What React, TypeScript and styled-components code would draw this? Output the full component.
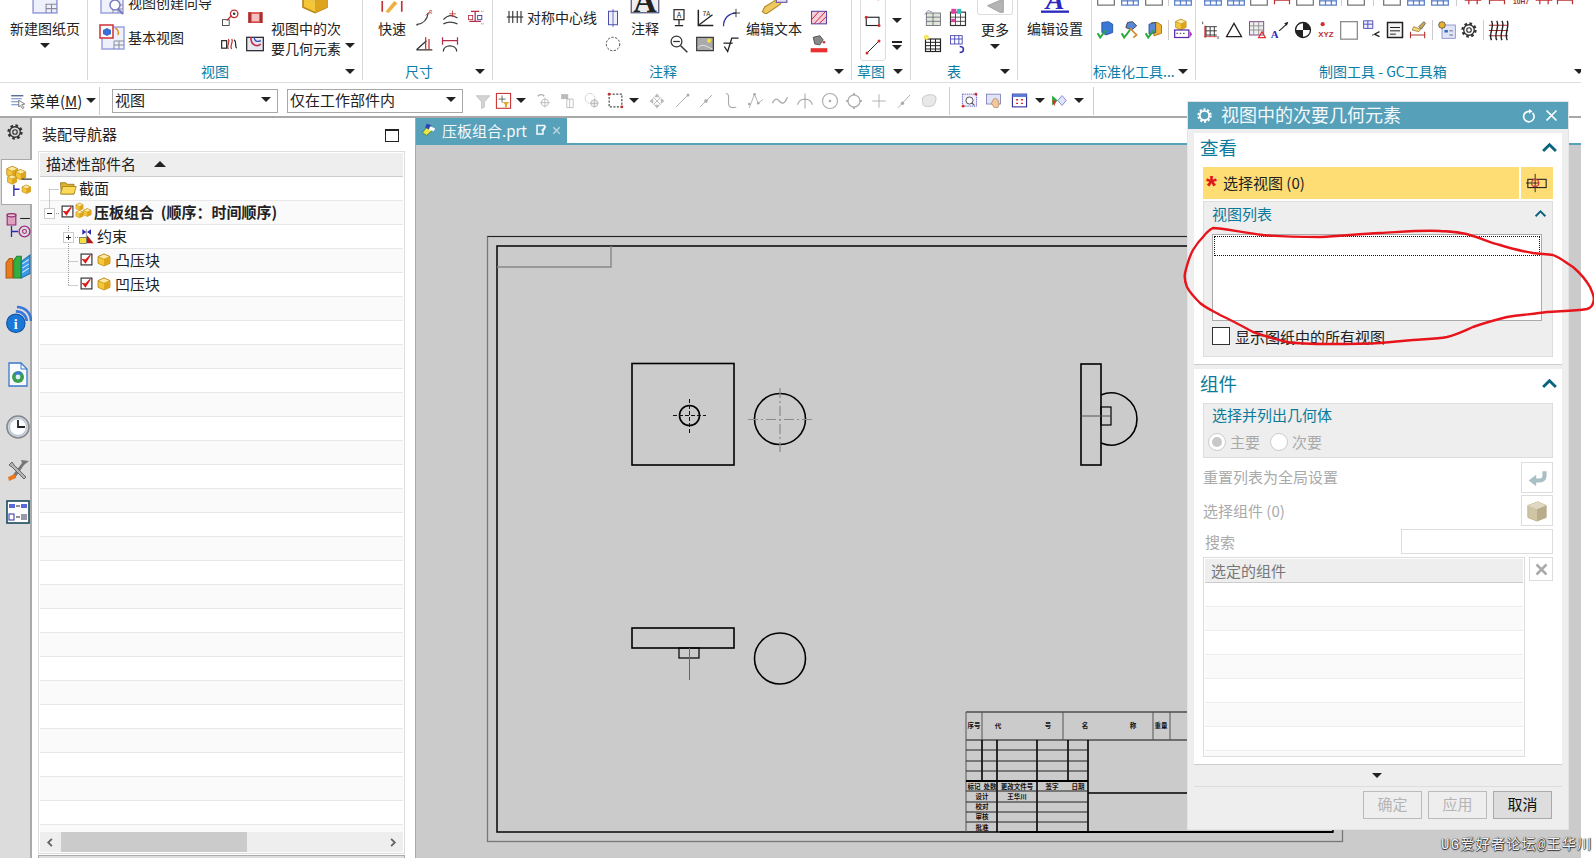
import React from 'react';
import styled, { createGlobalStyle } from 'styled-components';

const Global = createGlobalStyle`
  html, body { margin: 0; padding: 0; background: #fff; overflow: hidden; }
  body { font-family: "Noto Sans CJK SC", "Liberation Sans", sans-serif; font-size: 14px; color: #222; }
  * { box-sizing: border-box; }
`;

const Page = styled.div`position: relative; width: 1594px; height: 858px; overflow: hidden; background: #fff;`;
const Frame = styled.div`width: 1581px; height: 858px; display: flex; flex-direction: column;`;

/* ---------- ribbon ---------- */
const Ribbon = styled.div`display: flex; height: 83px; flex: none; border-bottom: 1px solid #ddd; overflow: hidden;`;
const Group = styled.section<{ $w: number; $end?: boolean }>`
  width: ${p => p.$w}px; height: 80px; flex: none; display: flex; flex-direction: column;
  border-right: ${p => (p.$end ? 'none' : '1px solid #d8d8d8')};
`;
const GroupBody = styled.div<{ $pl?: number }>`height: 63px; display: flex; align-items: flex-start; padding-left: ${p => p.$pl ?? 0}px;`;
const GroupFoot = styled.div<{ $pl: number; $pr?: number }>`
  height: 16px; display: flex; align-items: center; padding-left: ${p => p.$pl}px; padding-right: ${p => p.$pr ?? 7}px;
`;
const GroupLabel = styled.span`font-size: 14px; line-height: 16px; color: #0a7ea6; white-space: nowrap;`;
const Caret = styled.i<{ $ml?: number; $mt?: number }>`
  display: block; flex: none; width: 0; height: 0; border-left: 5px solid transparent; border-right: 5px solid transparent;
  border-top: 5px solid #222; margin-left: ${p => p.$ml ?? 0}px; margin-top: ${p => p.$mt ?? 0}px;
`;
const FootCaret = styled(Caret)<{ $mr?: number }>`margin-left: auto; margin-right: ${p => p.$mr ?? 0}px;`;
const TallTool = styled.div<{ $w?: number; $ml?: number }>`
  display: flex; flex-direction: column; align-items: center; flex: none;
  width: ${p => (p.$w ? `${p.$w}px` : 'auto')}; margin-left: ${p => p.$ml ?? 0}px;
`;
const TopIcon = styled.div`height: 14px; display: flex; align-items: flex-end; justify-content: center; overflow: hidden;`;
const ToolLabel = styled.div`font-size: 14px; line-height: 20px; margin-top: 4px; white-space: nowrap; color: #222;`;
const TwoLine = styled.div`display: flex; align-items: center; margin-top: 4px; width: 100%;`;
const TwoLineText = styled.div`font-size: 14px; line-height: 20px; white-space: nowrap;`;
const RowStack = styled.div<{ $w: number }>`width: ${p => p.$w}px; flex: none; margin-top: -10px;`;
const IconText = styled.div<{ $mt?: number }>`display: flex; align-items: center; gap: 4px; height: 24px; font-size: 14px; white-space: nowrap; margin-top: ${p => p.$mt ?? 0}px;`;
const SmallGrid = styled.div<{ $cols: number; $w?: number; $ml?: number }>`
  display: grid; grid-template-columns: repeat(${p => p.$cols}, ${p => p.$w ?? 25}px); grid-auto-rows: 26px;
  padding-top: 5px; flex: none; margin-left: ${p => p.$ml ?? 0}px;
`;
const Cell = styled.div<{ $w?: number }>`
  display: flex; align-items: center; justify-content: center; flex: none; ${p => (p.$w ? `width:${p.$w}px;` : '')}
`;
const TextRow = styled.div<{ $w: number }>`display: flex; align-items: center; gap: 3px; height: 26px; margin-top: 4px; width: ${p => p.$w}px; font-size: 14px; white-space: nowrap; flex: none;`;
const SketchStrip = styled.div`
  width: 26px; margin: -19px 0 0 8px; border: 1px solid #ddd; border-radius: 0 0 3px 3px; display: flex; flex-direction: column; flex: none;
`;
const SketchCell = styled.div`height: 26px; display: flex; align-items: center; justify-content: center; flex: none;`;
const CaretColumn = styled.div`display: flex; flex-direction: column; align-items: center; width: 22px; padding-top: 18px; flex: none;`;
const CaretBar = styled.b`display: block; width: 10px; height: 2px; background: #222; margin-top: 18px; margin-bottom: 2px;`;
const MoreBox = styled.div`width: 36px; height: 15px; border: 1px solid #ddd; border-top: none; border-radius: 0 0 3px 3px; display: flex; justify-content: center; overflow: hidden; align-items: flex-end;`;
const MoreTool = styled.div`display: flex; flex-direction: column; align-items: center; width: 44px; margin-left: 3px; flex: none;`;
const IconRows = styled.div`display: flex; flex-direction: column; margin-top: -21px;`;
const IconRow = styled.div<{ $pl?: number }>`display: flex; align-items: center; height: 34px; padding-left: ${p => p.$pl ?? 0}px;`;
const Sep = styled.b<{ $mx?: number; $h?: number }>`display: block; flex: none; width: 1px; height: ${p => p.$h ?? 20}px; background: #ccc; margin: 0 ${p => p.$mx ?? 0}px;`;

/* ---------- quick bar ---------- */
const QuickBar = styled.div`height: 35px; flex: none; display: flex; align-items: center; border-bottom: 2px solid #a8a8a8; padding: 2px 0 0 9px;`;
const MenuGroup = styled.div`width: 90px; flex: none; display: flex; align-items: center;`;
const MenuText = styled.span`font-size: 15px; margin-left: 3px; white-space: nowrap; u { text-decoration: underline; }`;
const Select = styled.div<{ $w: number; $ml: number }>`
  width: ${p => p.$w}px; height: 24px; margin-left: ${p => p.$ml}px; flex: none; border: 1px solid #a8a8a8; display: flex; align-items: center;
  justify-content: space-between; padding: 0 6px 2px 2px; font-size: 15px; background: #fff;
`;
const QCell = styled.div<{ $w: number; $ml?: number }>`width: ${p => p.$w}px; margin-left: ${p => p.$ml ?? 0}px; flex: none; display: flex; align-items: center; justify-content: center;`;

/* ---------- main ---------- */
const Main = styled.div`flex: 1; display: flex; min-height: 0;`;
const Rail = styled.nav`width: 32px; flex: none; background: #dcdcdc; border-right: 2px solid #aaa; display: flex; flex-direction: column; align-items: center;`;
const RailGear = styled.div`height: 41px; display: flex; align-items: center; justify-content: center; padding-bottom: 13px; width: 100%;`;
const RailTab = styled.div<{ $active?: boolean; $h: number }>`
  height: ${p => p.$h}px; display: flex; align-items: center; justify-content: center; flex: none;
  ${p => p.$active ? 'width: 32px; margin-left: 2px; margin-right: -2px; padding-left: 4px; background: #fff; border: 1px solid #aaa; border-right: none;' : 'width: 100%; padding-left: 5px;'}
`;
const NavPanel = styled.aside`width: 383px; flex: none; background: #fff; padding: 0 10px 0 6px; display: flex; flex-direction: column;`;
const NavHead = styled.div`height: 33px; flex: none; display: flex; align-items: center; justify-content: space-between; padding: 0 6px 2px 4px; font-size: 15px;`;
const Maximize = styled.i`display: block; width: 14px; height: 13px; border: 1px solid #222; border-top-width: 2px; margin-top: 3px;`;
const TreeBox = styled.div`flex: none; height: 703px; border: 1px solid #ddd; padding: 1px; background: #fff; position: relative; display: flex; flex-direction: column;`;
const TreeHead = styled.div`height: 24px; flex: none; background: #eee; border-bottom: 1px solid #ccc; display: flex; align-items: center; padding: 0 0 2px 6px; font-size: 15px; gap: 18px;`;
const SortUp = styled.i`display: block; width: 0; height: 0; border-left: 6px solid transparent; border-right: 6px solid transparent; border-bottom: 6px solid #222;`;
const TreeRows = styled.div`flex: 1; overflow: hidden; position: relative;`;
const TreeRow = styled.div<{ $odd: boolean; $pl?: number; $bold?: boolean; $gap?: number }>`
  height: 24px; display: flex; align-items: center; gap: ${p => p.$gap ?? 2}px; background: ${p => (p.$odd ? '#fafafa' : '#fff')}; border-bottom: 1px solid #e8e8e8;
  padding: 0 0 2px ${p => p.$pl ?? 0}px; font-size: 15px; font-weight: ${p => (p.$bold ? 700 : 400)}; white-space: pre; color: #222;
`;
const TreeLines = styled.svg`position: absolute; left: 0; top: 0; width: 120px; height: 120px; pointer-events: none;`;
const HScroll = styled.div`height: 20px; flex: none; background: #eee; display: flex; align-items: center;`;
const ScrollThumb = styled.div`width: 186px; height: 20px; background: #cbcbcb; margin-left: 21px;`;
const ScrollArrow = styled.div<{ $right?: boolean }>`margin-left: ${p => (p.$right ? 'auto' : '5px')}; margin-right: ${p => (p.$right ? '5px' : '0')}; display: flex;`;
const ScrollLeftWrap = styled.div`display: flex; width: 0; overflow: visible; align-items: center;`;
const NavBottom = styled.div`flex: 1; margin-top: 1px; border: 1px solid #aaa; border-width: 1px 1px 0; background: #ddd;`;

const Workspace = styled.div`flex: 1; min-width: 0; display: flex; flex-direction: column; border-left: 1px solid #aaa;`;
const TabBar = styled.div`height: 25px; flex: none; background: #fff; display: flex;`;
const DocTab = styled.div`width: 151px; background: #58a1bb; color: #f4fafc; display: flex; align-items: center; font-size: 15px; padding: 0 0 1px 5px; gap: 4px; white-space: nowrap;`;
const DocTabIcons = styled.div`display: flex; align-items: center; gap: 4px; margin-left: 4px;`;
const TabRule = styled.div`height: 2px; flex: none; background: #58a1bb;`;
const Canvas = styled.main`flex: 1; background: #cbcbcb; min-height: 0; overflow: hidden;`;
const Sheet = styled.svg`display: block; width: 1165px; height: 713px;`;
const TinyText = styled.text`font-family: "Noto Sans CJK SC", sans-serif; font-size: 6.5px; font-weight: 700; fill: #111; text-anchor: middle;`;

/* ---------- dialog ---------- */
const Dialog = styled.div`position: absolute; left: 1188px; top: 102px; width: 380px; height: 727px; background: #eee; display: flex; flex-direction: column; box-shadow: 0 0 0 1px #e4e4e4;`;
const DialogHead = styled.header`height: 27px; flex: none; background: #56a0ba; color: #fff; display: flex; align-items: center; padding: 0 5px 0 9px; font-size: 18px;`;
const DialogTitle = styled.span`margin: 0 0 3px 9px; white-space: nowrap; flex: 1; color: #f3f9fb;`;
const DialogBody = styled.div`padding: 4px 6px 0; display: flex; flex-direction: column; gap: 4px;`;
const Section = styled.section<{ $h: number }>`height: ${p => p.$h}px; flex: none; background: #fff; border-bottom: 1px solid #ccc; padding: 0 9px; display: flex; flex-direction: column;`;
const SectionHead = styled.div`height: 34px; flex: none; display: flex; align-items: center; justify-content: space-between; font-size: 18.5px; color: #0a7a9a; padding-bottom: 6px; margin: 0 -5px 0 -3px;`;
const SelectRow = styled.div`height: 32px; flex: none; display: flex; gap: 2px;`;
const SelectMain = styled.div`flex: 1; background: #ffdd75; display: flex; align-items: center; padding: 0 0 2px 1px; font-size: 15px; gap: 4px;`;
const SelectBtn = styled.div`width: 32px; background: #ffdd75; display: flex; align-items: center; justify-content: center;`;
const Star = styled.span`color: #e01818; width: 15px; text-align: center; font-size: 28px; font-weight: 700; line-height: 14px; height: 14px; font-family: "Liberation Sans", sans-serif; margin-top: 8px;`;
const GroupBox = styled.div<{ $h: number; $mt?: number }>`height: ${p => p.$h}px; flex: none; margin-top: ${p => p.$mt ?? 0}px; background: #eee; border: 1px solid #ddd; display: flex; flex-direction: column; padding: 0 10px 0 8px;`;
const BoxTitle = styled.div<{ $h: number; $pb: number }>`height: ${p => p.$h}px; flex: none; display: flex; align-items: center; justify-content: space-between; font-size: 15px; color: #0a7a9a; padding-bottom: ${p => p.$pb}px; margin-right: -5px;`;
const ListBox = styled.div`height: 87px; flex: none; background: #fff; border: 1px solid #aaa; padding: 1px; `;
const DottedRow = styled.div`height: 20px; border: 1px dotted #111;`;
const CheckRow = styled.label`display: flex; align-items: center; gap: 5px; height: 18px; margin-top: 6px; font-size: 15px; white-space: nowrap;`;
const CheckBox = styled.i`display: block; width: 18px; height: 18px; border: 1px solid #333; background: #fff;`;
const RadioRow = styled.div`display: flex; align-items: center; gap: 10px; color: #aaa; font-size: 15px; margin-left: -4px;`;
const RadioItem = styled.label`display: flex; align-items: center; gap: 4px;`;
const Radio = styled.i<{ $on?: boolean }>`
  display: flex; align-items: center; justify-content: center; width: 18px; height: 18px; border-radius: 50%; border: 1px solid #ccc; background: #fff;
  &::after { content: ""; display: ${p => (p.$on ? 'block' : 'none')}; width: 10px; height: 10px; border-radius: 50%; background: #c8c8c8; }
`;
const ActionRow = styled.div<{ $mt: number }>`height: 31px; flex: none; margin-top: ${p => p.$mt}px; display: flex; align-items: center; justify-content: space-between; color: #aaa; font-size: 15px;`;
const ActionLabel = styled.span`margin-bottom: 2px;`;
const ActionBtn = styled.div`width: 32px; height: 31px; border: 1px solid #ddd; background: #fff; display: flex; align-items: center; justify-content: center;`;
const SearchRow = styled.div`height: 25px; flex: none; margin-top: 3px; display: flex; align-items: center; justify-content: space-between; color: #aaa; font-size: 15px; padding-left: 2px;`;
const SearchInput = styled.div`width: 152px; height: 25px; background: #fff; border: 1px solid #ddd;`;
const TableRow = styled.div`height: 200px; flex: none; margin-top: 3px; display: flex; gap: 4px; align-items: flex-start;`;
const CompTable = styled.div`width: 322px; height: 200px; border: 1px solid #ddd; padding: 1px; overflow: hidden; background: #fff;`;
const CompHead = styled.div`height: 24px; background: #eee; border-bottom: 1px solid #ccc; color: #777; font-size: 15px; display: flex; align-items: center; padding-left: 6px; line-height: 1;`;
const CompRow = styled.div<{ $odd: boolean }>`height: 24px; background: ${p => (p.$odd ? '#fafafa' : '#fff')}; border-bottom: 1px solid #eee;`;
const ClearBtn = styled.div`width: 24px; height: 24px; border: 1px solid #ddd; display: flex; align-items: center; justify-content: center; background: #fff;`;
const Expander = styled.div`height: 17px; flex: none; margin: 5px 6px 0; border-bottom: 1px solid #ddd; display: flex; justify-content: center; padding: 3px 2px 0 0;`;
const Footer = styled.footer`display: flex; justify-content: flex-end; gap: 6px; padding: 4px 16px 0 0;`;
const DlgButton = styled.button<{ $primary?: boolean }>`
  width: 59px; height: 28px; padding: 0 0 3px; border: 1px solid ${p => (p.$primary ? '#aaa' : '#bbb')}; background: ${p => (p.$primary ? '#ddd' : '#eee')};
  color: ${p => (p.$primary ? '#111' : '#b4b4b4')}; font: 15px "Noto Sans CJK SC", sans-serif;
`;
const Overlay = styled.svg`position: absolute; left: 0; top: 0; width: 1594px; height: 858px; pointer-events: none;`;
const Watermark = styled.div`
  position: absolute; left: 1441px; top: 836px; color: #f4f4f4; font-size: 14px; line-height: 18px; letter-spacing: 1.3px; white-space: nowrap;
  font-family: "Liberation Mono", "Noto Sans CJK SC", monospace; text-shadow: 0 0 1px #222, 1px 0 1px #333, 0 1px 1px #333;
`;

/* ---------- icons ---------- */
const Ic = styled.svg<{ $s: number }>`display: block; flex: none; width: ${p => p.$s}px; height: ${p => p.$s}px;`;
const cube = (x = 0, y = 0, k = 1) => (
  <g transform={`translate(${x} ${y}) scale(${k})`}>
    <path d="M3 7 12 3l9 4v10l-9 4-9-4z" fill="#f4c63a" stroke="#b98512" strokeWidth="1.2" />
    <path d="M3 7l9 4 9-4-9-4z" fill="#fdeaa0" stroke="#b98512" strokeWidth="1" />
    <path d="M12 11v10l9-4V7z" fill="#dda41c" />
  </g>
);
const sheet = (x = 0, y = 0) => (
  <g transform={`translate(${x} ${y})`}>
    <rect x="1" y="1" width="22" height="22" fill="#eef0fb" stroke="#9aa2de" strokeWidth="1.5" />
    <path d="M13 23v-8h10M13 19h10M18 15v8" fill="none" stroke="#8a8a9a" />
  </g>
);
const g = (d: string, c = '#999', w = 1.5) => <path d={d} fill="none" stroke={c} strokeWidth={w} />;
const low = (n: React.ReactNode) => <g transform="translate(0 13)">{n}</g>;
const dash = '#aaa';

const icons: Record<string, React.ReactNode> = {
  sheet: sheet(),
  wizard: <>{sheet()}<circle cx="15" cy="15" r="5" fill="#fff" stroke="#7a7ac0" strokeWidth="1.5" /><path d="M18 19l5 5" stroke="#7a7ac0" strokeWidth="2" /></>,
  base: <>{sheet(1, 1)}<rect x="0" y="0" width="13" height="13" fill="#fff" stroke="#d03030" strokeWidth="1.5" /><path d="M3 5l4-2 4 2v4l-4 2-4-2z" fill="#3a6fd8" /><path d="M15 3c3 1 4 4 3 7" fill="none" stroke="#e89020" strokeWidth="1.5" /></>,
  proj: <><rect x="3" y="14" width="8" height="7" fill="#fff" stroke="#333" /><circle cx="17" cy="7" r="4.5" fill="#fff" stroke="#c03030" strokeWidth="1.6" />{g('M8 15l6-6', '#c03030')}<circle cx="17" cy="7" r="1.5" fill="#333" /></>,
  sect: <><rect x="4" y="5" width="17" height="13" fill="#d84848" /><path d="M4 5h3v13H4zM18 5h3v13h-3z" fill="#a83030" /><rect x="8" y="7" width="9" height="9" fill="#f6c0c0" /></>,
  brk: <><rect x="2" y="8" width="6" height="9" fill="#fff" stroke="#222" strokeWidth="1.4" />{g('M10 6c3 3-3 7 0 12M14 6c3 3-3 7 0 12', '#c03030')}{g('M17 7c4 3 0 8 3 10', '#222')}</>,
  detail: <><rect x="2" y="4" width="20" height="16" fill="#e8e8f0" stroke="#333" strokeWidth="1.6" /><path d="M7 4c0 10 8 12 12 8" fill="none" stroke="#c03050" strokeWidth="2" /><path d="M11 4c0 5 4 6 8 4" fill="none" stroke="#3050c0" strokeWidth="1.5" /></>,
  bigcube: <><g transform="translate(0 2)">{cube(0, 0)}</g><path d="M3 9l9-4v9l-9-3z" fill="#8cb4e8" /></>,
  quick: <>{g('M3 22V12M21 22V12', '#c03030')}<path d="M6 22l8-10 3 2-8 9z" fill="#f0b040" /></>,
  rad: <>{g('M3 20c8-1 13-6 14-14', '#444')}<circle cx="4" cy="20" r="1" fill="#444" />{g('M14 9l5-5', '#c03030', 1)}<text x="18" y="7" fontSize="6" fill="#c03030">R</text></>,
  ang: <>{g('M4 14c6-6 10-6 17-2M4 19c6-3 10-3 17 0', '#444')}{g('M15 3v8M11 7h8', '#c03030', 1)}</>,
  chain: <>{g('M6 4h10M11 4v12M4 16h14', '#b03048')}<rect x="3" y="9" width="5" height="5" fill="none" stroke="#b03048" /><rect x="14" y="9" width="5" height="5" fill="none" stroke="#3030a0" /><path d="M18 4h4M18 19h4" stroke="#c03030" strokeDasharray="1 1" /></>,
  angle: <>{g('M3 19l12-11M3 19h19', '#333')}{g('M14 4v15M18 6v13', '#c03030')}</>,
  arclen: <>{g('M4 21c0-9 16-9 16 0', '#333')}{g('M3 4v9M21 4v9M3 8h18', '#b03048')}</>,
  sym: <>{g('M4 4v16M9 4v16M15 4v16M20 4v16', '#333')}{g('M1 12h22', '#333')}</>,
  symbox: <><rect x="6" y="3" width="12" height="18" fill="#eef0fb" stroke="#4a4aa8" strokeWidth="1.3" />{g('M12 0v24', '#4a4aa8', 1)}</>,
  dcirc: <circle cx="12" cy="12" r="9" fill="none" stroke="#444" strokeDasharray="3 2" strokeWidth="1.3" />,
  bigA: <><rect x="1" y="0" width="22" height="23" fill="#eee" stroke="#55557a" /><text x="12" y="22" textAnchor="middle" fontSize="26" fontWeight="700" fontFamily="Liberation Serif" fill="#222">A</text></>,
  note: <><rect x="6" y="2" width="12" height="12" fill="#fff" stroke="#222" strokeWidth="1.4" /><text x="12" y="12" fontSize="9" textAnchor="middle" fill="#222">A</text>{g('M12 14v6M7 21h10', '#222')}</>,
  dimA: <>{g('M4 2v19h18', '#222', 1.8)}{g('M5 20l16-12', '#222')}<text x="9" y="10" fontSize="8" fill="#222">7A</text></>,
  arc: <>{g('M3 22C3 12 10 6 18 6', '#3030a0')}{g('M18 1v10M14 6h9', '#222', 1)}</>,
  zoom: <><circle cx="9" cy="9" r="6.5" fill="#fff" stroke="#333" strokeWidth="1.5" />{g('M5 9h8', '#333')}{g('M14 14l8 8', '#333', 1.8)}</>,
  image: <><rect x="2" y="4" width="20" height="16" fill="#aaa" stroke="#333" strokeWidth="1.4" /><circle cx="17" cy="8" r="2.5" fill="#f4e040" /><path d="M3 17c5-6 9-3 18 1" stroke="#eee" fill="none" /></>,
  rough: <>{g('M4 15l4 6 5-16h8', '#222', 1.6)}{g('M3 11h11', '#222')}</>,
  bone: <><path d="M2 22l2-4 8-5 6-8 4 3-5 8-9 6-3 2z" fill="#edc960" stroke="#b58a2a" /><rect x="14" y="6" width="9" height="8" fill="#e8e0f0" stroke="#6a5aa8" /></>,
  hatch: <><rect x="3" y="4" width="18" height="15" fill="#f4d0d8" stroke="#5a4aa8" strokeWidth="1.3" />{g('M3 14l9-10M6 19L20 4M12 19l9-9', '#d02040', 1.2)}</>,
  paint: <><path d="M5 4l8-2 4 5-4 6-6-1z" fill="#888" stroke="#444" /><circle cx="18" cy="10" r="1.5" fill="#c03030" /><rect x="2" y="17" width="20" height="5" fill="#e83030" /></>,
  skRect: <><rect x="3" y="7" width="17" height="11" fill="none" stroke="#222" strokeWidth="1.5" /><circle cx="3" cy="7" r="2" fill="#d03030" /><circle cx="20" cy="18" r="2" fill="#d03030" /></>,
  skLine: <>{g('M4 20L20 4', '#222', 1.3)}<circle cx="4" cy="20" r="2" fill="#d03030" /><circle cx="20" cy="4" r="2" fill="#d03030" /></>,
  t1: <><rect x="4" y="6" width="17" height="15" fill="#dfe8d8" stroke="#667" />{g('M4 11h17M4 16h17M12 6v15', '#667', 1)}<path d="M2 8l4-5 5 2" fill="none" stroke="#889" /></>,
  t2: <><rect x="3" y="5" width="18" height="16" fill="#fff" stroke="#333" strokeWidth="1.4" />{g('M3 11h18M3 16h18M9 5v16M15 5v16', '#333', 1)}<rect x="4" y="1" width="6" height="6" fill="#e040a0" /><rect x="11" y="1" width="5" height="6" fill="#30c0c0" /><rect x="4" y="13" width="5" height="4" fill="#e040a0" /></>,
  t3: <><rect x="3" y="6" width="18" height="15" fill="#fff" stroke="#222" strokeWidth="1.4" />{g('M3 10h18M3 14h18M3 18h18M9 6v15M15 6v15', '#222', 1.2)}<circle cx="4" cy="4" r="3" fill="#f4e860" /></>,
  t4: <><rect x="3" y="2" width="14" height="10" fill="#fff" stroke="#3a3ab0" />{g('M3 6h14M8 2v10M13 2v10', '#3a3ab0', 1)}{g('M14 15c6 0 6 7 0 7', '#3a3ab0', 2)}</>,
  moreA: <path d="M3 14l15 8h4V6z" fill="#b4b4b4" stroke="#999" />,
  editA: <><text x="12" y="20" textAnchor="middle" fontSize="24" fontWeight="700" fontStyle="italic" fontFamily="Liberation Serif" fill="#2a2ac0">A</text><rect x="0" y="21" width="24" height="2" fill="#2a2ac0" /></>,
  std1: <><path d="M7 3l8-1 5 3v10l-8 3-5-3z" fill="#3a78d8" stroke="#224a90" />{g('M2 16l3 5 7-9', '#2aa83a', 2.4)}</>,
  std2: <><path d="M9 3l6-1 5 5-6 5-7-3z" fill="#5a88d8" stroke="#333" /><path d="M12 10l8 8-4 3" fill="none" stroke="#d09030" strokeWidth="2" />{g('M2 16l3 5 7-9', '#2aa83a', 2.4)}</>,
  std3: <><path d="M9 3h7l5 3v10l-9 3z" fill="#f0b030" stroke="#a06a10" /><path d="M6 5l8-2v12l-8 2z" fill="#5a88d8" stroke="#224a90" />{g('M2 16l3 5 7-9', '#2aa83a', 2.4)}</>,
  std4: <>{cube(1, -3, 0.7)}<rect x="2" y="12" width="17" height="9" fill="#fff" stroke="#5a2aa8" strokeWidth="1.5" /><path d="M4 16h2M8 16h2M12 16h2" stroke="#222" /><path d="M20 13l3 4-3 4z" fill="#b030c0" /></>,
  gc1: <><path d="M2 2v3" stroke="#333" />{g('M6 8h13M6 13h13M6 18h13M6 8v12M11 8v12M16 8v12', '#333', 1.1)}<path d="M4 7h2v14H4z" fill="#d03030" /><path d="M4 20h15" stroke="#d03030" /><text x="19" y="23" fontSize="6" fill="#333">x</text></>,
  tri: g('M12 4L3 20h18z', '#222', 1.5),
  gc3: <><rect x="3" y="2" width="17" height="16" fill="#eee" stroke="#884a8a" strokeWidth="1.2" />{g('M3 7h17M3 12h17M8 2v16M14 2v16', '#888', 1)}{g('M14 21l4-7 4 7z', '#e03030', 1.5)}</>,
  gc4: <><text x="1" y="22" fontSize="13" fontWeight="700" fill="#2a2ac0" fontFamily="Liberation Serif">A</text>{g('M11 13L21 4', '#222', 1.4)}<path d="M22 2l-5 2 3 3z" fill="#222" /></>,
  gc5: <><circle cx="12" cy="12" r="9" fill="#fff" stroke="#222" strokeWidth="1.6" /><path d="M12 3a9 9 0 0 1 9 9h-9zM12 21a9 9 0 0 1-9-9h9z" fill="#222" /></>,
  gc6: <><circle cx="8" cy="5" r="2.5" fill="#d03030" /><text x="12" y="20" textAnchor="middle" fontSize="9.5" fontWeight="700" fill="#c03030" fontFamily="Liberation Sans">XYZ</text></>,
  gc7: <rect x="2" y="2" width="20" height="21" fill="#fff" stroke="#888" strokeWidth="1.5" />,
  gc8: <><rect x="2" y="1" width="11" height="9" fill="#eef" stroke="#3a3ab0" />{g('M2 5h11M7 1v9', '#3a3ab0', 1)}{g('M21 14l-6 3 6 3', '#222', 1.5)}{g('M12 18h2', '#222', 1)}</>,
  gc9: <><rect x="3" y="3" width="18" height="18" fill="#f4f4f4" stroke="#222" strokeWidth="1.8" />{g('M6 9h12M6 13h12M6 17h7', '#222', 1.2)}</>,
  gc10: <><path d="M13 8l6-6 2 2-5 7z" fill="#d0a850" stroke="#555" /><path d="M7 8l8 3-2 3-8-2z" fill="#f0d880" stroke="#a08030" />{g('M3 14v8M20 14v8M3 18h17', '#b03030', 1.3)}</>,
  gc11: <><rect x="6" y="6" width="16" height="16" fill="#dfe4f8" stroke="#8888c8" /><circle cx="6" cy="6" r="4" fill="#e8b030" stroke="#555" /><rect x="9" y="12" width="4" height="3" fill="#2a6ac8" /><path d="M15 13h4M15 18h4" stroke="#555" /></>,
  gear: <><circle cx="12" cy="12" r="8.5" fill="none" stroke="#333" strokeWidth="3.4" strokeDasharray="3.4 3.2" /><circle cx="12" cy="12" r="7" fill="none" stroke="#333" strokeWidth="1.8" /><circle cx="12" cy="12" r="3" fill="none" stroke="#333" strokeWidth="1.6" /></>,
  gc13: <>{g('M1 6h22M1 12h22M1 18h22', '#b03030', 1.4)}{g('M4 1c4 7-4 15 0 22M10 1c4 7-4 15 0 22M16 1c4 7-4 15 0 22M22 1c3 7-4 15 0 22', '#222', 1.6)}</>,
  top1: low(g('M2 1h20v9H2z', '#777', 1.5)),
  top2: low(g('M2 1h20v9H2zM2 5h20M9 1v9M16 1v9', '#5a80c8', 1.5)),
  top3: low(g('M2 4h20M7 0v9M17 0v9', '#c03030', 1.5)),
  top4: low(g('M3 4h18M3 0v9M21 0v9', '#c03030', 1.5)),
  top5: low(<text x="12" y="9" textAnchor="middle" fontSize="8" fontWeight="700" fill="#a03030" fontFamily="Liberation Sans">10H7</text>),
  top6: low(<text x="12" y="7" textAnchor="middle" fontSize="9" fontWeight="700" fill="#555" fontFamily="Liberation Sans">AB</text>),
  menu: <><path d="M3 5h16M3 9h14M3 13h12M3 17h12" stroke="#6a86c8" strokeWidth="1.6" fill="none" /><path d="M3 5h16" stroke="#345" /><path d="M13 11l8 5-4 1 3 4-2 1-3-4-2 2z" fill="#fff" stroke="#555" /></>,
  qfilter: <><path d="M3 5h18l-7 8v7l-4 2v-9z" fill="#d4d4d4" stroke="#bbb" /></>,
  qred: <><rect x="2" y="2" width="20" height="21" fill="#fff" stroke="#c83030" strokeWidth="1.5" />{g('M10 5v10M5 10h10', '#555', 1.2)}<path d="M11 14h9l-3 4v4h-3v-4z" fill="#e8a830" /></>,
  q1: <>{g('M4 6c2-3 7-3 9 0', dash, 2)}<circle cx="14" cy="15" r="5" fill="none" stroke={dash} />{g('M14 8v14M7 15h14', dash, 1)}</>,
  q2: <><path d="M3 3h10v7H3z" fill="#bbb" />{g('M11 10h9v12h-9zM15 10v12', dash, 1)}</>,
  q3: <><circle cx="10" cy="9" r="7" fill="none" stroke={dash} strokeDasharray="2 1" /><circle cx="16" cy="16" r="5" fill="#eee" stroke={dash} />{g('M16 10v12M10 16h12', dash, 1)}</>,
  qrect: <><rect x="3" y="3" width="18" height="18" fill="none" stroke="#222" strokeWidth="1.4" strokeDasharray="3 2" /><circle cx="3" cy="3" r="2" fill="#c83030" /><circle cx="21" cy="21" r="2" fill="#c83030" /></>,
  q5: <><path d="M12 2l4 5h-8zM12 22l4-5H8zM2 12l5-4v8zM22 12l-5-4v8z" fill="#bbb" />{g('M7 7l10 10M17 7L7 17', dash, 1)}</>,
  q6: <>{g('M4 20L20 4', dash, 1.2)}<circle cx="20" cy="4" r="2" fill={dash} /></>,
  q7: <>{g('M4 20L20 4', dash, 1.2)}<circle cx="12" cy="12" r="2.4" fill={dash} /></>,
  q8: g('M5 2c8 0 0 14 6 18 2 1 5 1 8 0', dash, 1.5),
  q9: <>{g('M3 21L10 3l5 12 6-5', dash, 1.2)}<circle cx="10" cy="3" r="1.8" fill={dash} /><circle cx="15" cy="15" r="1.8" fill={dash} /><circle cx="3" cy="16" r="1.8" fill={dash} /></>,
  q10: g('M2 15c4-9 7-5 10-2s6 3 10-6', dash, 1.8),
  q11: <>{g('M2 17c3-10 17-10 20 0M12 2v20', dash, 1.4)}</>,
  q12: <><circle cx="12" cy="12" r="10" fill="none" stroke={dash} strokeWidth="1.5" /><circle cx="12" cy="12" r="1.8" fill={dash} /></>,
  q13: <><circle cx="12" cy="12" r="8" fill="none" stroke={dash} strokeWidth="1.5" /><circle cx="12" cy="3" r="1.6" fill={dash} /><circle cx="12" cy="21" r="1.6" fill={dash} /><circle cx="3" cy="12" r="1.6" fill={dash} /><circle cx="21" cy="12" r="1.6" fill={dash} /></>,
  q14: g('M12 3v18M3 12h18', dash, 1.2),
  q15: <>{g('M4 21L20 4', dash, 1.2)}<circle cx="10" cy="15" r="2.2" fill={dash} /></>,
  q16: <path d="M3 8c5-5 13-6 18-2 1 4 0 8-3 12-5 2-12 2-14-1z" fill="#e8e8e8" stroke="#bbb" />,
  q17: <><rect x="2" y="3" width="20" height="17" fill="#eef" stroke="#3a3ab0" strokeDasharray="2 1" /><circle cx="12" cy="12" r="5" fill="#fff" stroke="#555" strokeWidth="1.4" />{g('M15 15l4 4', '#555')}<circle cx="21" cy="3" r="2" fill="#c83030" /><circle cx="3" cy="20" r="2" fill="#c83030" /></>,
  q18: <><rect x="2" y="3" width="20" height="14" fill="#dfe4f8" stroke="#6a6aa8" /><path d="M12 10l3-1 3 2 2 6-2 5h-5l-4-6z" fill="#f0c8a0" stroke="#b08050" /></>,
  q19: <><rect x="2" y="3" width="20" height="18" fill="#fff" stroke="#2a2a9a" strokeWidth="1.5" /><rect x="2" y="3" width="20" height="4" fill="#5a7ad8" /><path d="M7 10h3v2H7zM14 10h3v2h-3zM7 15h3v2H7zM14 15h3v2h-3z" fill="#d83030" /></>,
  q20: <><path d="M3 5l8 7-8 7z" fill="#2aa83a" /><path d="M3 12l6 0-3 8z" fill="#d03030" /><path d="M11 12l6-7 6 7-6 7z" fill="#dfe4f8" stroke="#5a6ac8" /></>,
  tabIcon: <><path d="M2 15l8-10 8 5-10 9z" fill="#e6e84a" stroke="#3a6a3a" /><path d="M8 2l7 3-3 6-6-3z" fill="#2a4ab0" /><path d="M13 6l7 3-2 4-7-2z" fill="#fff" /></>,
  tabDoc: <><path d="M4 3h15v7l-3 3v7H4z" fill="none" stroke="#f2fafc" strokeWidth="3" /><path d="M13 13l9-8" stroke="#f2fafc" strokeWidth="2.4" /></>,
  tabX: <path d="M5 5l14 14M19 5L5 19" stroke="#bcd6e0" strokeWidth="3" />,
  railAsm: <>{cube(-1, -4, 0.55)}{cube(7, -1, 0.5)}{cube(0, 4, 0.45)}<path d="M7 14v10M7 18h5" fill="none" stroke="#2a2ab0" strokeWidth="1.2" /><path d="M14 9h9" stroke="#222" />{cube(13, 13, 0.42)}</>,
  railCon: <><path d="M2 2h8v10H2z" fill="#e0a0c0" stroke="#8a2a6a" /><ellipse cx="6" cy="3" rx="4" ry="1.5" fill="#f0c0d8" stroke="#8a2a6a" /><path d="M6 13v10M6 18h6" stroke="#2a2ab0" fill="none" strokeWidth="1.2" /><path d="M14 6h9" stroke="#222" /><circle cx="18" cy="18" r="5" fill="none" stroke="#a03080" strokeWidth="1.3" /><circle cx="18" cy="18" r="1.8" fill="none" stroke="#a03080" /></>,
  railBooks: <><path d="M1 9l3-4h3v18H1z" fill="#e87a20" stroke="#b05a10" /><path d="M8 7l3-4h4v20H8z" fill="#30b040" stroke="#208030" /><path d="M15 8l8-6v17l-8 4z" fill="#3a9ae8" stroke="#2070b0" /><path d="M16 10l6-4M16 14l6-4M16 18l6-4" stroke="#cfe8f8" /></>,
  railInfo: <><circle cx="10" cy="15" r="8.5" fill="#1a78d8" stroke="#1050a0" /><text x="10" y="20" textAnchor="middle" fontSize="13" fontWeight="700" fill="#fff" fontFamily="Liberation Serif">i</text><path d="M10 4c6 0 10 4 10 9M11 0c8 0 13 6 13 13" fill="none" stroke="#3a78d8" strokeWidth="2.4" /></>,
  railDoc: <><path d="M3 1h12l6 6v17H3z" fill="#f8fbff" stroke="#3a78c8" strokeWidth="1.3" /><path d="M15 1v6h6" fill="none" stroke="#3a78c8" /><circle cx="12" cy="15" r="6" fill="#3aa050" /><path d="M8 12c3-3 6-3 8-1l-3 3-3-1z" fill="#3a78d8" /><circle cx="12" cy="15" r="2.4" fill="#dfeef8" /></>,
  railClock: <><circle cx="12" cy="12" r="11" fill="#c8d8ec" stroke="#888" strokeWidth="1.6" /><circle cx="12" cy="12" r="8.5" fill="#fafcff" stroke="#bbb" /><path d="M12 5v7h7" stroke="#222" strokeWidth="1.8" fill="none" /></>,
  railTools: <><path d="M15 2l8 1-5 4-9 13-3-2 10-13z" fill="#777" /><path d="M3 7l3-3 2 3 12 12-2 2L6 9z" fill="#b4b4b4" stroke="#666" /><path d="M2 19l7-3 1 4-7 3z" fill="#e87a20" /></>,
  railLayout: <><rect x="1" y="1" width="22" height="22" fill="#fff" stroke="#1a4a5a" strokeWidth="1.6" /><rect x="3" y="4" width="6" height="4" fill="#5a6ad8" /><rect x="15" y="4" width="6" height="4" fill="#5a6ad8" /><path d="M10 6h4M10 17h4" stroke="#222" /><rect x="3" y="14" width="5" height="6" fill="#fff" stroke="#2a2ab0" /><rect x="15" y="14" width="6" height="6" fill="#99a" /></>,
  folder: <><path d="M2 5h7l2 2h9v13H3z" fill="#e0b030" stroke="#8a6a10" /><path d="M5 10h18l-3 10H2z" fill="#fbd95a" stroke="#a07a10" /></>,
  check: <><rect x="2" y="2" width="20" height="20" fill="#fff" stroke="#222" strokeWidth="2" /><path d="M5 12l5 6 9-14-9 9z" fill="#e01818" stroke="#e01818" strokeWidth="2" /></>,
  asm: <>{cube(-2, -3, 0.6)}{cube(-2, 8, 0.6)}{cube(9, 5, 0.65)}</>,
  cube: cube(),
  con: <><path d="M11 2v20" stroke="#222" strokeDasharray="2 1" /><path d="M5 2l6 4-6 4zM18 2l-6 4 6 4z" fill="#2a2ab0" /><rect x="1" y="14" width="10" height="9" fill="#f4e040" stroke="#555" /><path d="M12 11l10 12H12z" fill="#b81818" /></>,
  starBtn: <><rect x="2" y="8" width="20" height="9" fill="none" stroke="#222" strokeWidth="1.2" /><path d="M10 2v20" stroke="#222" /><path d="M0 12h14" stroke="#222" /><circle cx="10" cy="12" r="4" fill="none" stroke="#d03040" strokeWidth="1.4" /></>,
  dlgGear: <><circle cx="12" cy="12" r="7.5" fill="none" stroke="#fff" strokeWidth="3" /><circle cx="12" cy="12" r="10" fill="none" stroke="#fff" strokeWidth="3" strokeDasharray="3.5 2.8" /></>,
  refresh: <><path d="M18 6.5a9 9 0 1 1-5.5-2.5" fill="none" stroke="#fff" strokeWidth="2.8" /><path d="M12 0v8l6-4z" fill="#fff" /></>,
  close: <path d="M4 4l16 16M20 4L4 20" stroke="#fff" strokeWidth="2.8" />,
  chevUp: <path d="M3 17l9-9 9 9" fill="none" stroke="#0a6480" strokeWidth="4" />,
  chevUpS: <path d="M3 17l9-9 9 9" fill="none" stroke="#0a6480" strokeWidth="3.6" />,
  back: <><path d="M21 4v6c0 3-3 5-6 5H9" fill="none" stroke="#a9bfc6" strokeWidth="5" /><path d="M11 8L2 15l9 7z" fill="#a9bfc6" /></>,
  tanCube: <><path d="M2 6l11-4 9 4v13l-10 4-10-4z" fill="#cfc4a4" stroke="#bdb08c" /><path d="M2 6l10 4 10-4-9-4z" fill="#e0d8c0" /><path d="M12 10v13l10-4V6z" fill="#b8ac8a" /></>,
  clearX: <path d="M4 4l16 16M20 4L4 20" stroke="#aaa" strokeWidth="4" />,
  sLeft: <path d="M15 4l-8 8 8 8" fill="none" stroke="#666" strokeWidth="4" />,
  sRight: <path d="M9 4l8 8-8 8" fill="none" stroke="#666" strokeWidth="4" />,
};
const I: React.FC<{ n: string; s?: number }> = ({ n, s = 20 }) => (
  <Ic $s={s} viewBox="0 0 24 24" overflow="visible">{icons[n]}</Ic>
);

const row9a = ['gc1', 'tri', 'gc3', 'gc4', 'gc5', 'gc6', 'gc7', 'gc8', 'gc9', 'gc10'];
const quickMid = ['q5', 'q6', 'q7', 'q8', 'q9', 'q10', 'q11', 'q12', 'q13', 'q14', 'q15', 'q16'];
const railItems: [string, number, number][] = [
  ['railCon', 40, 26], ['railBooks', 42, 26], ['railInfo', 66, 26], ['railDoc', 42, 24], ['railClock', 64, 24], ['railTools', 22, 24], ['railLayout', 62, 24],
];

const Sketch = () => {
  const blackThin = { stroke: '#000', strokeWidth: 1.2, fill: 'none' };
  const heavy = { stroke: '#000', strokeWidth: 1.6, fill: 'none' };
  const center = { stroke: '#8a8a8a', strokeWidth: 1.2, strokeDasharray: '10 3 2 3', fill: 'none' };
  const hRows = [750, 761, 771, 791, 802, 812, 822];
  return (
    <Sheet viewBox="416 145 1165 713">
      <rect x="487.5" y="236.5" width="855" height="605" fill="none" stroke="#777" strokeWidth="1.3" />
      <path d="M487.5 236.5h855" stroke="#222" />
      <rect x="497" y="246" width="836" height="586" fill="none" stroke="#111" strokeWidth="1.6" />
      <path d="M1000 832h333" stroke="#000" strokeWidth="2" />
      <path d="M497 267h114v-21" fill="none" stroke="#888" strokeWidth="1.4" />
      <rect x="632" y="363.5" width="102" height="101.5" {...heavy} />
      <circle cx="689.5" cy="415.5" r="10" {...heavy} />
      <path d="M673 415.5h33M689.5 399v34" stroke="#111" strokeWidth="1" strokeDasharray="4 2" />
      <circle cx="780" cy="419" r="25.5" {...heavy} />
      <path d="M748 419.5h65M780 388v64" {...center} />
      <rect x="1081" y="364" width="20" height="101" {...heavy} />
      <path d="M1101 395A26 26 0 1 1 1101 443" {...heavy} />
      <rect x="1101" y="407" width="10" height="18" {...blackThin} />
      <path d="M1081 416h30" stroke="#555" strokeWidth="1" />
      <rect x="632" y="628" width="102" height="20" {...heavy} />
      <rect x="679" y="648" width="20" height="10" {...blackThin} />
      <path d="M689.5 648v32" stroke="#666" strokeWidth="1" />
      <circle cx="780" cy="658.5" r="25.5" {...heavy} />
      {/* title block */}
      <path d="M966 712h222M966 740h222" stroke="#111" strokeWidth="1.2" />
      <path d="M966 712v120M982 712v28M1063 712v28M1153 712v28M1170 712v28" stroke="#555" strokeWidth="1" />
      <path d="M982 740v41M997 740v92M1037 740v92M1068 740v41M1088 740v92" stroke="#000" strokeWidth="1.6" />
      {hRows.map(y => <path key={y} d={`M966 ${y}h122`} stroke="#222" strokeWidth="1" />)}
      <path d="M966 781h122" stroke="#000" strokeWidth="1.8" />
      <path d="M1088 793h100" stroke="#000" strokeWidth="1.4" />
      <TinyText x="974" y="728">序号</TinyText>
      <TinyText x="998" y="728">代</TinyText><TinyText x="1048" y="728">号</TinyText>
      <TinyText x="1085" y="728">名</TinyText><TinyText x="1133" y="728">称</TinyText>
      <TinyText x="1161" y="728">重量</TinyText>
      <TinyText x="974" y="789">标记</TinyText><TinyText x="990" y="789">处数</TinyText><TinyText x="1017" y="789">更改文件号</TinyText>
      <TinyText x="1052" y="789">签字</TinyText><TinyText x="1078" y="789">日期</TinyText>
      <TinyText x="982" y="799">设计</TinyText><TinyText x="1017" y="799">王华川</TinyText>
      <TinyText x="982" y="809">校对</TinyText><TinyText x="982" y="819">审核</TinyText><TinyText x="982" y="830">批准</TinyText>
    </Sheet>
  );
};

export default function App() {
  return (
    <Page>
      <Global />
      <Frame>
        <Ribbon>
          <Group $w={88}>
            <GroupBody>
              <TallTool $w={90}>
                <TopIcon><I n="sheet" s={26} /></TopIcon>
                <ToolLabel>新建图纸页</ToolLabel>
                <Caret $mt={5} />
              </TallTool>
            </GroupBody>
            <GroupFoot $pl={0} />
          </Group>
          <Group $w={275}>
            <GroupBody $pl={12}>
              <RowStack $w={117}>
                <IconText><I n="wizard" s={24} />视图创建向导</IconText>
                <IconText $mt={11}><I n="base" s={24} />基本视图</IconText>
              </RowStack>
              <SmallGrid $cols={2}>
                <Cell><I n="proj" /></Cell><Cell><I n="sect" /></Cell>
                <Cell><I n="brk" /></Cell><Cell><I n="detail" /></Cell>
              </SmallGrid>
              <TallTool $w={88} $ml={4}>
                <TopIcon><I n="bigcube" s={32} /></TopIcon>
                <TwoLine>
                  <TwoLineText>视图中的次<br />要几何元素</TwoLineText>
                  <Caret $ml={4} $mt={14} />
                </TwoLine>
              </TallTool>
            </GroupBody>
            <GroupFoot $pl={113}><GroupLabel>视图</GroupLabel><FootCaret /></GroupFoot>
          </Group>
          <Group $w={130}>
            <GroupBody $pl={10}>
              <TallTool $w={38}>
                <TopIcon><I n="quick" s={26} /></TopIcon>
                <ToolLabel>快速</ToolLabel>
              </TallTool>
              <SmallGrid $cols={3} $w={26}>
                <Cell><I n="rad" /></Cell><Cell><I n="ang" /></Cell><Cell><I n="chain" /></Cell>
                <Cell><I n="angle" /></Cell><Cell><I n="arclen" /></Cell>
              </SmallGrid>
            </GroupBody>
            <GroupFoot $pl={42}><GroupLabel>尺寸</GroupLabel><FootCaret /></GroupFoot>
          </Group>
          <Group $w={359}>
            <GroupBody $pl={13}>
              <TextRow $w={94}><I n="sym" s={18} />对称中心线</TextRow>
              <SmallGrid $cols={1} $w={26}>
                <Cell><I n="symbox" s={18} /></Cell><Cell><I n="dcirc" s={18} /></Cell>
              </SmallGrid>
              <TallTool $w={38}>
                <TopIcon><I n="bigA" s={30} /></TopIcon>
                <ToolLabel>注释</ToolLabel>
              </TallTool>
              <SmallGrid $cols={3} $w={26} $ml={2}>
                <Cell><I n="note" /></Cell><Cell><I n="dimA" /></Cell><Cell><I n="arc" /></Cell>
                <Cell><I n="zoom" /></Cell><Cell><I n="image" /></Cell><Cell><I n="rough" /></Cell>
              </SmallGrid>
              <TallTool $w={60}>
                <TopIcon><I n="bone" s={28} /></TopIcon>
                <ToolLabel>编辑文本</ToolLabel>
              </TallTool>
              <SmallGrid $cols={1} $w={26} $ml={2}>
                <Cell><I n="hatch" /></Cell><Cell><I n="paint" /></Cell>
              </SmallGrid>
            </GroupBody>
            <GroupFoot $pl={156}><GroupLabel>注释</GroupLabel><FootCaret /></GroupFoot>
          </Group>
          <Group $w={59}>
            <GroupBody>
              <SketchStrip>
                <SketchCell><I n="skRect" s={16} /></SketchCell>
                <SketchCell><I n="skRect" s={18} /></SketchCell>
                <SketchCell><I n="skLine" s={18} /></SketchCell>
              </SketchStrip>
              <CaretColumn><Caret /><CaretBar /><Caret /></CaretColumn>
            </GroupBody>
            <GroupFoot $pl={5}><GroupLabel>草图</GroupLabel><FootCaret /></GroupFoot>
          </Group>
          <Group $w={107}>
            <GroupBody $pl={9}>
              <SmallGrid $cols={2}>
                <Cell><I n="t1" /></Cell><Cell><I n="t2" /></Cell>
                <Cell><I n="t3" /></Cell><Cell><I n="t4" /></Cell>
              </SmallGrid>
              <MoreTool>
                <MoreBox><I n="moreA" s={20} /></MoreBox>
                <ToolLabel>更多</ToolLabel>
                <Caret $mt={5} />
              </MoreTool>
            </GroupBody>
            <GroupFoot $pl={36}><GroupLabel>表</GroupLabel><FootCaret /></GroupFoot>
          </Group>
          <Group $w={74}>
            <GroupBody $pl={9}>
              <TallTool $w={56}>
                <TopIcon><I n="editA" s={28} /></TopIcon>
                <ToolLabel>编辑设置</ToolLabel>
              </TallTool>
            </GroupBody>
            <GroupFoot $pl={0} />
          </Group>
          <Group $w={104}>
            <GroupBody>
              <IconRows>
                <IconRow $pl={2}>
                  <Cell $w={24}><I n="top1" /></Cell><Cell $w={24}><I n="top2" /></Cell><Cell $w={24}><I n="top1" /></Cell><Sep $mx={2} /><Cell $w={24}><I n="top2" /></Cell>
                </IconRow>
                <IconRow $pl={2}>
                  <Cell $w={24}><I n="std1" /></Cell><Cell $w={24}><I n="std2" /></Cell><Cell $w={24}><I n="std3" /></Cell><Sep $mx={2} /><Cell $w={24}><I n="std4" /></Cell>
                </IconRow>
              </IconRows>
            </GroupBody>
            <GroupFoot $pl={1}><GroupLabel>标准化工具...</GroupLabel><FootCaret /></GroupFoot>
          </Group>
          <Group $w={385} $end>
            <GroupBody>
              <IconRows>
                <IconRow $pl={5}>
                  {['top2', 'top2', 'top1', 'top4', 'top1', 'top2'].map((n, i) => <Cell key={i} $w={23}><I n={n} /></Cell>)}
                  <Sep $mx={2} />
                  <Cell $w={23}><I n="top1" /></Cell>
                  <Sep $mx={6} />
                  {['top1', 'top2', 'top2'].map((n, i) => <Cell key={i} $w={24}><I n={n} /></Cell>)}
                  <Sep $mx={4} />
                  <Cell $w={24}><I n="top3" /></Cell><Cell $w={24}><I n="top4" /></Cell><Cell $w={24}><I n="top5" /></Cell><Cell $w={22}><I n="top3" /></Cell><Cell $w={20}><I n="top4" /></Cell><Cell $w={8}><I n="top4" s={8} /></Cell><Cell $w={24}><I n="top6" /></Cell>
                </IconRow>
                <IconRow $pl={3}>
                  {row9a.map(n => <Cell key={n} $w={23}><I n={n} /></Cell>)}
                  <Sep $mx={3} />
                  <Cell $w={22}><I n="gc11" /></Cell>
                  <Cell $w={22}><I n="gear" s={18} /></Cell>
                  <Sep $mx={3} />
                  <Cell $w={22}><I n="gc13" s={21} /></Cell>
                </IconRow>
              </IconRows>
            </GroupBody>
            <GroupFoot $pl={123} $pr={0}><GroupLabel>制图工具 - GC工具箱</GroupLabel><FootCaret $mr={-3} /></GroupFoot>
          </Group>
        </Ribbon>

        <QuickBar>
          <MenuGroup>
            <I n="menu" s={18} />
            <MenuText>菜单(<u>M</u>)</MenuText>
            <Caret $ml={4} />
          </MenuGroup>
          <Sep $h={28} />
          <Select $w={166} $ml={12}>视图<Caret /></Select>
          <Select $w={176} $ml={9}>仅在工作部件内<Caret /></Select>
          <QCell $w={24} $ml={8}><I n="qfilter" s={18} /></QCell>
          <QCell $w={16}><I n="qred" s={17} /></QCell>
          <QCell $w={20}><Caret /></QCell>
          {['q1', 'q2', 'q3', 'qrect'].map(n => <QCell key={n} $w={24}><I n={n} s={17} /></QCell>)}
          <QCell $w={14}><Caret /></QCell>
          {quickMid.map((n, i) => <QCell key={n} $w={24.7} $ml={i === 0 ? 3.6 : 0}><I n={n} s={18} /></QCell>)}
          <Sep $mx={8} $h={28} />
          <QCell $w={24}><I n="q17" s={17} /></QCell>
          <QCell $w={23}><I n="q18" s={17} /></QCell>
          <QCell $w={30}><I n="q19" s={17} /></QCell>
          <QCell $w={10}><Caret /></QCell>
          <QCell $w={28}><I n="q20" s={17} /></QCell>
          <QCell $w={12}><Caret /></QCell>
          <Sep $mx={8} $h={28} />
        </QuickBar>

        <Main>
          <Rail>
            <RailGear><I n="gear" s={18} /></RailGear>
            <RailTab $active $h={46}><I n="railAsm" s={27} /></RailTab>
            {railItems.map(([n, h, s]) => <RailTab key={n} $h={h}><I n={n} s={s} /></RailTab>)}
          </Rail>
          <NavPanel>
            <NavHead>装配导航器<Maximize /></NavHead>
            <TreeBox>
              <TreeHead>描述性部件名<SortUp /></TreeHead>
              <TreeRows>
                <TreeRow $odd={false} $pl={19}><I n="folder" s={18} />截面</TreeRow>
                <TreeRow $odd $pl={21} $bold><I n="check" s={13} /><I n="asm" s={16} />压板组合  (顺序：时间顺序)</TreeRow>
                <TreeRow $odd={false} $pl={39}><I n="con" s={16} />约束</TreeRow>
                <TreeRow $odd $pl={40} $gap={3}><I n="check" s={13} /><I n="cube" s={16} />凸压块</TreeRow>
                <TreeRow $odd={false} $pl={40} $gap={3}><I n="check" s={13} /><I n="cube" s={16} />凹压块</TreeRow>
                {Array.from({ length: 23 }).map((_, i) => <TreeRow key={i} $odd={i % 2 === 0} />)}
                <TreeLines viewBox="0 0 120 120">
                  <path d="M9.5 12.5H19M9.5 12.5V31M14 36.5h5M28.5 49V108.5M33 60.5h6M28.5 84.5H38M28.5 108.5H38" fill="none" stroke="#999" strokeDasharray="1 1" />
                  <rect x="4.5" y="31.5" width="10" height="10" fill="#fff" stroke="#ccc" />
                  <path d="M7 36.5h5" stroke="#222" />
                  <rect x="23.5" y="55.5" width="10" height="10" fill="#fff" stroke="#ccc" />
                  <path d="M26 60.5h5M28.5 58v5" stroke="#222" />
                </TreeLines>
              </TreeRows>
              <HScroll>
                <ScrollLeftWrap><ScrollArrow><I n="sLeft" s={11} /></ScrollArrow></ScrollLeftWrap>
                <ScrollThumb />
                <ScrollArrow $right><I n="sRight" s={11} /></ScrollArrow>
              </HScroll>
            </TreeBox>
            <NavBottom />
          </NavPanel>
          <Workspace>
            <TabBar>
              <DocTab>
                <I n="tabIcon" s={17} />压板组合.prt
                <DocTabIcons><I n="tabDoc" s={12} /><I n="tabX" s={11} /></DocTabIcons>
              </DocTab>
            </TabBar>
            <TabRule />
            <Canvas><Sketch /></Canvas>
          </Workspace>
        </Main>
      </Frame>

      <Dialog>
        <DialogHead>
          <I n="dlgGear" s={15} />
          <DialogTitle>视图中的次要几何元素</DialogTitle>
          <Cell $w={23}><I n="refresh" s={14} /></Cell>
          <Cell $w={23}><I n="close" s={15} /></Cell>
        </DialogHead>
        <DialogBody>
          <Section $h={232}>
            <SectionHead>查看<I n="chevUp" s={17} /></SectionHead>
            <SelectRow>
              <SelectMain><Star>*</Star>选择视图 (0)</SelectMain>
              <SelectBtn><I n="starBtn" s={22} /></SelectBtn>
            </SelectRow>
            <GroupBox $h={156} $mt={2}>
              <BoxTitle $h={32} $pb={10}>视图列表<I n="chevUpS" s={13} /></BoxTitle>
              <ListBox><DottedRow /></ListBox>
              <CheckRow><CheckBox />显示图纸中的所有视图</CheckRow>
            </GroupBox>
          </Section>
          <Section $h={396}>
            <SectionHead>组件<I n="chevUp" s={17} /></SectionHead>
            <GroupBox $h={55}>
              <BoxTitle $h={27} $pb={6}>选择并列出几何体</BoxTitle>
              <RadioRow>
                <RadioItem><Radio $on />主要</RadioItem>
                <RadioItem><Radio />次要</RadioItem>
              </RadioRow>
            </GroupBox>
            <ActionRow $mt={4}><ActionLabel>重置列表为全局设置</ActionLabel><ActionBtn><I n="back" s={20} /></ActionBtn></ActionRow>
            <ActionRow $mt={2}>选择组件 (0)<ActionBtn><I n="tanCube" s={22} /></ActionBtn></ActionRow>
            <SearchRow>搜索<SearchInput /></SearchRow>
            <TableRow>
              <CompTable>
                <CompHead>选定的组件</CompHead>
                {Array.from({ length: 8 }).map((_, i) => <CompRow key={i} $odd={i % 2 === 1} />)}
              </CompTable>
              <ClearBtn><I n="clearX" s={15} /></ClearBtn>
            </TableRow>
          </Section>
        </DialogBody>
        <Expander><Caret /></Expander>
        <Footer>
          <DlgButton>确定</DlgButton>
          <DlgButton>应用</DlgButton>
          <DlgButton $primary>取消</DlgButton>
        </Footer>
      </Dialog>

      <Overlay viewBox="0 0 1594 858">
        <path
          d="M1213 228C1222 228 1240 232 1263 235C1282 237 1300 237 1320 237C1340 236 1360 234 1380 233C1400 232 1420 230 1440 231C1455 232 1462 232 1473 236C1483 239 1490 243 1500 245C1512 249 1522 251 1533 253C1540 254 1546 254 1553 255C1561 258 1566 263 1573 267C1580 273 1586 280 1590 287C1593 294 1595 298 1593 303C1592 307 1590 308 1587 309C1574 311 1560 311 1547 312C1533 314 1520 315 1507 317C1495 320 1484 323 1473 327C1464 331 1456 335 1447 337C1436 339 1424 339 1413 340C1402 341 1391 342 1380 343C1363 344 1347 344 1330 344C1315 344 1301 344 1287 342C1275 339 1264 336 1253 332C1242 326 1231 320 1220 315C1213 311 1206 308 1200 303C1195 298 1190 293 1187 287C1185 282 1184 278 1185 273C1187 265 1189 257 1193 250C1196 245 1199 241 1203 237C1206 233 1209 230 1213 228Z"
          fill="none" stroke="#e8141c" strokeWidth="2.4" strokeLinecap="round"
        />
      </Overlay>
      <Watermark>UG爱好者论坛@王华川</Watermark>
    </Page>
  );
}
